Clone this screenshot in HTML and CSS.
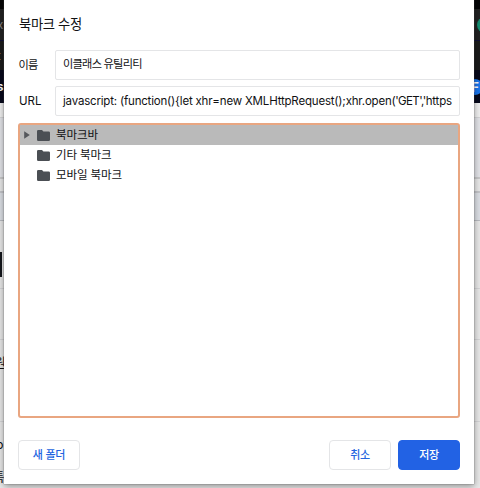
FILE: index.html
```html
<!DOCTYPE html>
<html lang="ko">
<head>
<meta charset="utf-8">
<title>북마크 수정</title>
<link rel="stylesheet" href="styles.css">
</head>
<body>
<div class="backdrop">
  <div class="band top"></div>
  <div class="band tabs"><span class="cut">x</span><i class="dot green"></i></div>
  <div class="band address"><span class="cut">t</span></div>
  <div class="band favorites"><b class="cut">s</b><i class="dot blue">F</i></div>
  <div class="band header"></div>
  <div class="band menu"></div>
  <div class="band info"></div>
  <div class="band gap"></div>
  <div class="band heading"></div>
  <div class="band section"><i class="mark"></i></div>
  <div class="band row"></div>
  <div class="band post"><span class="cut">원</span></div>
  <div class="band footer"><span class="cut round">o</span><span class="cut">특</span></div>
</div>
<main class="dialog">
  <h1>북마크 수정</h1>
  <div class="field name"><label>이름</label><div class="input"><span>이클래스 유틸리티</span></div></div>
  <div class="field url"><label>URL</label><div class="input"><span>javascript: (function(){let xhr=new XMLHttpRequest();xhr.open<span class="args">('GET','</span>https</span></div></div>
  <div class="tree">
    <div class="node selected"><svg class="arrow" viewBox="0 0 6 8"><path d="M.2.2 5.8 4 .2 7.8Z"/></svg><svg class="folder" viewBox="0 0 13 11"><path d="M1.3 0H5l1.4 1.4h5.3A1.3 1.3 0 0 1 13 2.7v7A1.3 1.3 0 0 1 11.7 11H1.3A1.3 1.3 0 0 1 0 9.7V1.3A1.3 1.3 0 0 1 1.3 0Z"/></svg><span>북마크바</span></div>
    <div class="node"><svg class="folder" viewBox="0 0 13 11"><path d="M1.3 0H5l1.4 1.4h5.3A1.3 1.3 0 0 1 13 2.7v7A1.3 1.3 0 0 1 11.7 11H1.3A1.3 1.3 0 0 1 0 9.7V1.3A1.3 1.3 0 0 1 1.3 0Z"/></svg><span>기타 북마크</span></div>
    <div class="node"><svg class="folder" viewBox="0 0 13 11"><path d="M1.3 0H5l1.4 1.4h5.3A1.3 1.3 0 0 1 13 2.7v7A1.3 1.3 0 0 1 11.7 11H1.3A1.3 1.3 0 0 1 0 9.7V1.3A1.3 1.3 0 0 1 1.3 0Z"/></svg><span>모바일 북마크</span></div>
  </div>
  <div class="actions"><button class="new">새 폴더</button><button>취소</button><button class="save">저장</button></div>
</main>
</body>
</html>
```
FILE: styles.css
```css
* { box-sizing: border-box; }
body {
  margin: 0;
  height: 488px;
  overflow: hidden;
  position: relative;
  font-family: Inter, "Noto Sans CJK KR", sans-serif;
  font-size: 11.5px;
  color: #101113;
}
.backdrop {
  height: 488px;
  display: grid;
  grid-template-rows: 9px 32px 29px 33px 15px 61px 14px 28px 25px 43px 51px 82px 66px;
  background: #e8e8e8;
}
.band {
  display: flex;
  align-items: center;
  justify-content: space-between;
  overflow: hidden;
  min-height: 0;
  border-bottom: 1px solid #d5d5d7;
}
.top { background: #050506; border: 0; }
.tabs { background: #222; border-color: #101035; color: #888; }
.address { background: #1b1b1b; border: 0; color: #888; }
.favorites { background: #07091b; border: 0; color: #fff; }
.header { background: #f0f0f0; }
.menu { background: #e3e4e8; border-bottom: 2px solid #c9c9ca; }
.info { border-bottom: 2px solid #c5c6ca; }
.gap { background: #dcdfe5; border-color: #b9bbc0; }
.heading { border: 0; }
.section { align-items: flex-start; }
.post { align-items: flex-start; padding-top: 12px; }
.cut { margin-left: -3px; }
.post .cut { margin-left: -6px; font-size: 13px; }
.mark { width: 2px; height: 25px; margin-top: 6px; background: #15171c; }
.dot { flex: none; width: 16px; height: 16px; border-radius: 50%; }
.green { background: #158f72; margin-right: -13px; }
.blue { background: #1976ed; font: bold 13px/16px Inter, sans-serif; margin-right: -3px; text-align: center; }
.footer {
  flex-direction: column;
  align-items: flex-start;
  justify-content: flex-start;
  gap: 15px;
  padding-top: 14px;
  border: 0;
}
.footer .cut { margin-left: -7px; line-height: 18px; font-size: 12.5px; }
.footer .round { margin-left: -4px; }
.dialog {
  position: absolute;
  top: 0;
  left: 4px;
  width: 470px;
  height: 484px;
  padding: 14px 14px 0;
  background: #fff;
  box-shadow: 0 0 1px #555, 0 2px 7px rgba(0,0,0,.4);
}
h1 {
  margin: 0 0 15px 1px;
  font-size: 13.3px;
  font-weight: 400;
  line-height: 21px;
  letter-spacing: -.35px;
}
.field { display: flex; align-items: center; height: 30px; margin-bottom: 6px; }
.field label { width: 37px; padding-left: 1px; flex: none; }
.name { letter-spacing: -.75px; font-size: 11.2px; }
.name label { padding: 0 0 3px .5px; }
.input {
  flex: 1;
  height: 30px;
  padding-left: 7px;
  border: 1px solid #e4e5e7;
  border-radius: 2px;
  line-height: 28px;
  white-space: nowrap;
  overflow: hidden;
}
.name .input { line-height: 27px; }
.url { margin-bottom: 7px; }
.url .input { letter-spacing: -.19px; line-height: 29px; }
.args { letter-spacing: -.6px; }
.tree {
  height: 295px;
  border: 2px solid #e9a681;
  border-radius: 3px;
}
.node { display: flex; align-items: center; height: 20px; padding-left: 17px; line-height: 20px; letter-spacing: -.12px; }
.selected { padding-left: 4px; background: #bababa; }
.arrow { width: 6px; height: 8px; margin-right: 7px; fill: #55585c; }
.folder { width: 13px; height: 11px; margin-right: 6px; fill: #4b4f54; }
.actions { display: flex; gap: 7px; margin-top: 22px; }
button {
  width: 62px;
  height: 30px;
  padding: 0 0 2px;
  border: 1px solid #e4e5e7;
  border-radius: 4px;
  background: #fff;
  color: #2364df;
  font: 500 11px/26px "Noto Sans CJK KR", sans-serif;
  letter-spacing: -.25px;
}
.new { margin-right: auto; }
.save { background: #2262e4; border-color: #2262e4; color: #fff; }
```
